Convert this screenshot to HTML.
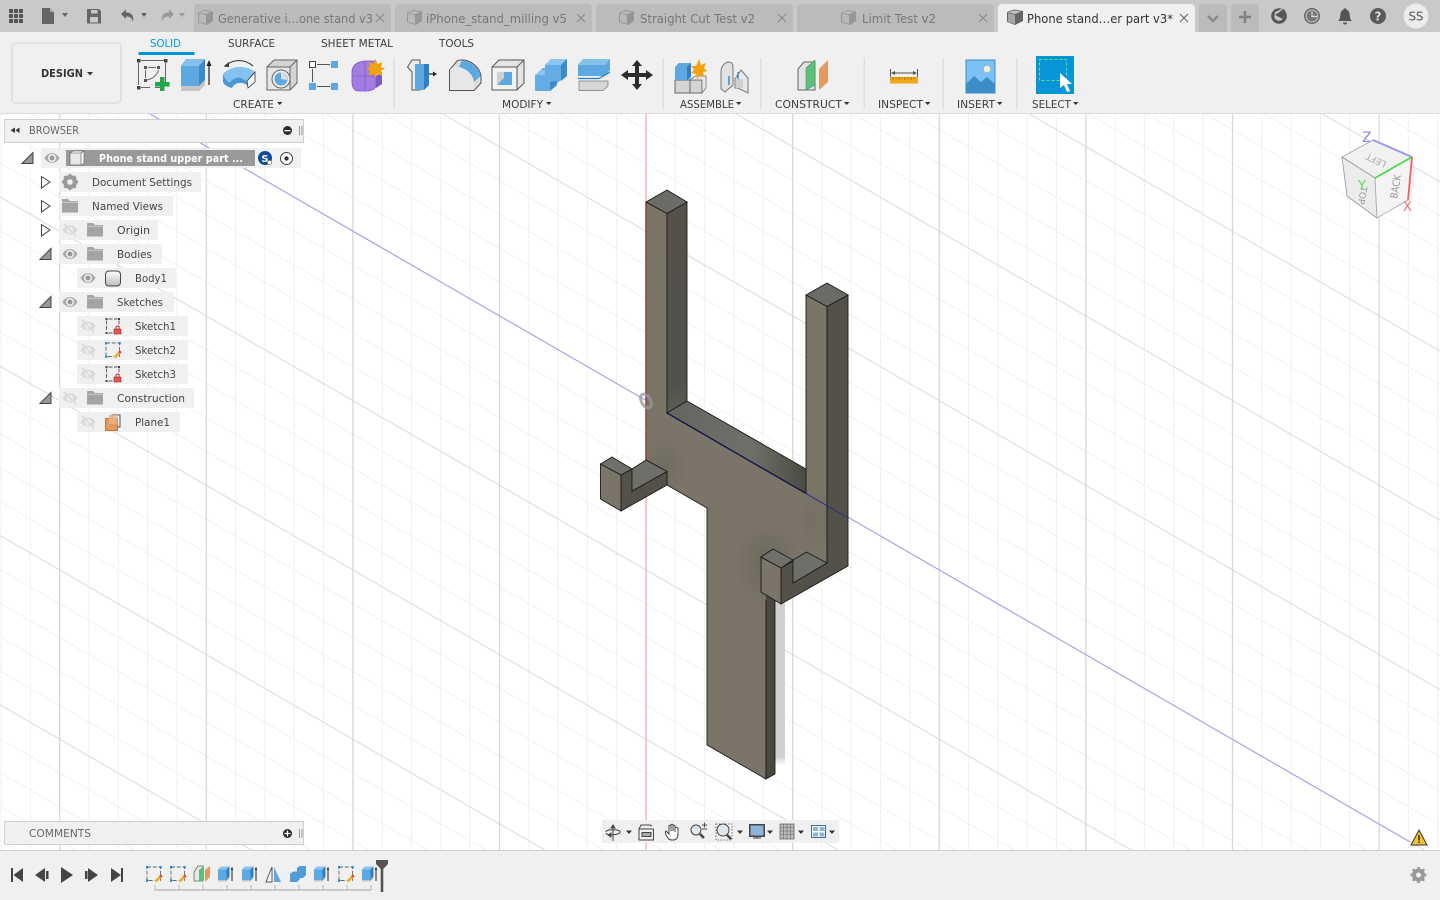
<!DOCTYPE html>
<html><head><meta charset="utf-8"><title>Phone stand</title>
<style>
html,body{margin:0;padding:0;background:#fff;width:1440px;height:900px;overflow:hidden}
svg{display:block;position:absolute;left:0;top:0}
text{font-family:"DejaVu Sans","Liberation Sans",sans-serif;font-size:11px;fill:#444}
.tab{font-size:12px;fill:#777}
.hd{font-size:11px;fill:#3c3c3c}
.tr{font-size:11px;fill:#444}
</style></head><body>
<svg width="1440" height="900" viewBox="0 0 1440 900" xmlns="http://www.w3.org/2000/svg">
<defs>
<pattern id="gv" width="29.32" height="10" patternUnits="userSpaceOnUse" patternTransform="translate(645.5,0)"><rect width="1" height="10" fill="#f0f0f0"/></pattern>
<pattern id="gV" width="146.6" height="10" patternUnits="userSpaceOnUse" patternTransform="translate(645.5,0)"><rect width="1.2" height="10" fill="#d6d6d6"/></pattern>
<pattern id="gd" width="100" height="33.86" patternUnits="userSpaceOnUse" patternTransform="translate(646,400) skewY(30)"><rect width="100" height="1" fill="#efefef"/></pattern>
<pattern id="gD" width="100" height="169.3" patternUnits="userSpaceOnUse" patternTransform="translate(646,400) skewY(30)"><rect width="100" height="1.1" fill="#dadada"/></pattern>
<linearGradient id="slab" x1="0" x2="1" y1="0" y2="0"><stop offset="0" stop-color="#64655e"/><stop offset=".6" stop-color="#6f706a"/><stop offset="1" stop-color="#4b4a42"/></linearGradient>
<linearGradient id="sidepost" x1="0" x2="0" y1="0" y2="1"><stop offset="0" stop-color="#53514a"/><stop offset=".85" stop-color="#52504a"/><stop offset="1" stop-color="#5c5d56"/></linearGradient>
<linearGradient id="cyl" x1="0" x2="0" y1="0" y2="1"><stop offset="0" stop-color="#fff"/><stop offset="1" stop-color="#bbb"/></linearGradient>
<linearGradient id="shad" x1="0" x2="0" y1="0" y2="1"><stop offset="0" stop-color="#d0d0d0"/><stop offset=".95" stop-color="#d0d0d0"/><stop offset="1" stop-color="#d0d0d0" stop-opacity="0"/></linearGradient>
<radialGradient id="ao"><stop offset="0" stop-color="#4c4a42" stop-opacity=".3"/><stop offset="1" stop-color="#4c4a42" stop-opacity="0"/></radialGradient>
<clipPath id="frontClip"><path d="M646 202L667 213.500V413L806 493.500V295L827 306.500V563L781 590V603L766 595V779L707 745V508L667 485V471.500L646 460Z"/></clipPath>
<g id="eye"><path d="M-7.500 0C-4-6.500 4-6.500 7.500 0C4 6.500-4 6.500-7.500 0Z" fill="#aaa"/><circle r="4" fill="#f0f0f0"/><circle r="2.500" fill="#999"/></g>
<g id="eyeoff" opacity=".6"><path d="M-7.500 0C-4-6 4-6 7.500 0C4 6-4 6-7.500 0Z" fill="#ccc"/><circle r="3" fill="#f0f0f0"/><path d="M-6-6L6 6" stroke="#d0d0d0" stroke-width="2"/></g>
<g id="folder"><path d="M-8-6.500L-7-7H-2L0-5H8V6.500H-8Z" fill="#a4a4a4"/><path d="M-8-3.800H8" stroke="#e0e0e0" stroke-width=".7"/></g>
<g id="skBase" fill="none"><path d="M-4.500-7H4.500M6-5.500V2M-6.500-5.500V5.500M-4.500 7H0" stroke="#555" stroke-width=".9" stroke-dasharray="4 1.500"/><g fill="#444" stroke="none"><rect x="-7.500" y="-8" width="2" height="2"/><rect x="5" y="-8" width="2" height="2"/><rect x="-7.500" y="6" width="2" height="2"/></g></g>
<g id="lock"><rect x="-1" y="3" width="7" height="5" fill="#e05858" stroke="#b02020" stroke-width=".6"/><path d="M1 3V1.500a1.500 1.500 0 013 0V3" fill="none" stroke="#c03030"/></g>
<g id="ext"><path d="M0 4.500L3 1.500H11.500V11.500L8.500 15H0Z" fill="#5da8e0"/><path d="M0 4.500L3 1.500H11.500L8.500 4.500Z" fill="#8cc4ee"/><path d="M8.500 4.500L11.500 1.500V11.500L8.500 15Z" fill="#2f7fbe"/><path d="M0 15H8.500L11.500 12V13.500L8.500 16.500H0Z" fill="#c4c4c4"/><path d="M14 3V16" stroke="#333" stroke-width="1.100"/><path d="M12.700 5L14 1.500L15.300 5Z" fill="#333"/></g>
<g id="sk2"><rect x="1" y="1" width="13.500" height="13.500" fill="none" stroke="#666" stroke-dasharray="4 1.800" stroke-width=".9"/><rect x="0" y="0" width="2.300" height="2.300" fill="#1e90e0"/><rect x="13.500" y="0" width="2.300" height="2.300" fill="#1e90e0"/><rect x="0" y="13.500" width="2.300" height="2.300" fill="#1e90e0"/><path d="M9.500 15.500L14.500 10.500" stroke="#e9b33a" stroke-width="2.800"/><path d="M14 11L15.800 9.200" stroke="#e05050" stroke-width="2.800"/></g>
</defs>

<!-- canvas -->
<rect x="0" y="114" width="1440" height="736" fill="#fff"/>
<rect x="0" y="114" width="1440" height="736" fill="url(#gd)"/>
<rect x="0" y="114" width="1440" height="736" fill="url(#gv)"/>
<rect x="0" y="114" width="1440" height="736" fill="url(#gD)"/>
<rect x="0" y="114" width="1440" height="736" fill="url(#gV)"/>
<rect x="645.300" y="114" width="1.600" height="736" fill="#f6bcbc"/>
<path d="M150 113.800L1410 842" stroke="#9c9cf2" stroke-width="1"/>

<!-- shadow -->
<rect x="775" y="600" width="10" height="165" fill="url(#shad)"/>
<!-- thin side -->
<path d="M765.500 542L775 548V774L766 779Z" fill="#4a4840" stroke="#111" stroke-width=".8"/>
<path d="M775 547L793 557.500L792 561L775 551Z" fill="#fff"/>
<!-- main front -->
<path d="M646 202L667 213.500V413L806 493.500V295L827 306.500V563L781 590V603L766 595V779L707 745V508L667 485V471.500L646 460Z" fill="#7a7568"/>
<g clip-path="url(#frontClip)">
<ellipse cx="768" cy="565" rx="34" ry="48" fill="url(#ao)"/>
<ellipse cx="664" cy="465" rx="24" ry="34" fill="url(#ao)" opacity=".7"/>
<ellipse cx="815" cy="520" rx="20" ry="40" fill="url(#ao)" opacity=".4"/>
</g>
<path d="M646 202V460" stroke="#8e3a3a" stroke-width="1.400"/>
<path d="M646 202L667 213.500V413L806 493.500V295L827 306.500M646 460L667 471.500V485L707 508V745L766 779V600" fill="none" stroke="#1a1a1a" stroke-width=".9"/>
<!-- left post side & top -->
<path d="M667 213.500L687 202V401L667 413Z" fill="url(#sidepost)" stroke="#1a1a1a" stroke-width=".9"/>
<path d="M646 202L667 190L687 202L667 213.500Z" fill="#6b6c65" stroke="#1a1a1a" stroke-width=".9"/>
<!-- slab -->
<path d="M667 413L687 401L806 469V493.500Z" fill="url(#slab)" stroke="#1a1a1a" stroke-width=".9"/>
<path d="M667 413L806 493.500" stroke="#10104a" stroke-width="1.300"/>
<!-- right post -->
<path d="M827 306.500L848 295V566L781 604V568L793 561V583L827 563Z" fill="#53514a" stroke="#1a1a1a" stroke-width=".9"/>
<path d="M806 295L827 283L848 295L827 306.500Z" fill="#6b6c65" stroke="#1a1a1a" stroke-width=".9"/>
<path d="M827 306.500V563" stroke="#1a1a1a" stroke-width=".9"/>
<path d="M793 560L806.500 552L827 563L793 583Z" fill="#6e6f69" stroke="#1a1a1a" stroke-width=".9"/>
<!-- right block -->
<path d="M761 557L781 568V604L761 592Z" fill="#7a7568" stroke="#1a1a1a" stroke-width=".9"/>
<path d="M761 557L773 549L793 560L781 568Z" fill="#6f706a" stroke="#1a1a1a" stroke-width=".9"/>
<!-- left hook -->
<path d="M621 475L632 469V491L667 471.500V485L621 511Z" fill="#53514a" stroke="#1a1a1a" stroke-width=".9"/>
<path d="M632 469L646 460L667 471.500L632 491Z" fill="#6e6f69" stroke="#1a1a1a" stroke-width=".9"/>
<path d="M600.500 464L621 475V511L600.500 499Z" fill="#7a7568" stroke="#1a1a1a" stroke-width=".9"/>
<path d="M600.500 464L612 457L632 469L621 475Z" fill="#6f706a" stroke="#1a1a1a" stroke-width=".9"/>
<!-- blue over model -->
<path d="M806 493.500L848 518" stroke="#2a2a90" stroke-width="1"/>
<!-- origin marker -->
<ellipse cx="646" cy="401" rx="4.500" ry="7.500" transform="rotate(-30 646 401)" fill="none" stroke="#999" stroke-width="3" opacity=".8"/>

<!-- view cube -->
<path d="M1412 157L1416 170L1411 200L1380 216L1395 180Z" fill="#ddd" opacity=".5"/>
<path d="M1342 157L1373 140L1412 157L1375 178Z" fill="#f1f1f1" stroke="#aaa" stroke-width=".8"/>
<path d="M1342 157L1375 178L1377 218L1347 196Z" fill="#ececec" stroke="#999" stroke-width=".8"/>
<path d="M1375 178L1412 157L1408 200L1377 218Z" fill="#f4f4f4" stroke="#aaa" stroke-width=".8"/>
<text transform="translate(1387,162) rotate(205)" style="font-size:9px;fill:#aaa">LEFT</text>
<text transform="translate(1361,186) rotate(100)" style="font-size:9px;fill:#999">TOP</text>
<text transform="translate(1397,199) rotate(-80)" textLength="24" lengthAdjust="spacingAndGlyphs" style="font-size:10px;fill:#999">BACK</text>
<path d="M1373 140L1412 157" stroke="#9a9aee" stroke-width="2"/>
<path d="M1412 157L1375 178" stroke="#4fd84f" stroke-width="1.800"/>
<path d="M1412 157L1408 200" stroke="#ee6464" stroke-width="1.800"/>
<text x="1362" y="142" style="font-size:14px;fill:#8a8af0">Z</text>
<text x="1358" y="190" style="font-size:13px;fill:#55dd55">Y</text>
<text x="1403" y="211" style="font-size:13px;fill:#ee7070">X</text>

<!-- warning -->
<path d="M1419 830L1427 845H1411Z" fill="#f2c230" stroke="#333" stroke-width="1"/>
<rect x="1418.300" y="835" width="1.400" height="5.500" fill="#222"/><rect x="1418.300" y="841.500" width="1.400" height="1.500" fill="#222"/>

<!-- top bar -->
<rect x="0" y="0" width="1440" height="32" fill="#c9c9c9"/>
<g fill="#bbb">
<path d="M194 32V8a4 4 0 014-4H387a4 4 0 014 4V32Z"/>
<path d="M395 32V8a4 4 0 014-4H588a4 4 0 014 4V32Z"/>
<path d="M596 32V8a4 4 0 014-4H789a4 4 0 014 4V32Z"/>
<path d="M797 32V8a4 4 0 014-4H990a4 4 0 014 4V32Z"/>
<path d="M1199 32V8a4 4 0 014-4H1223a4 4 0 014 4V32Z"/>
<path d="M1231 32V8a4 4 0 014-4H1255a4 4 0 014 4V32Z"/>
</g>
<path d="M998 32V8a4 4 0 014-4H1191a4 4 0 014 4V32Z" fill="#f0f0f0"/>
<!-- tab icons -->
<g id="tc"><path d="M198 13L204 10L213 11.500V21L207 25L198 22.500Z" fill="#969696"/><path d="M199 13.500L206 15V23.800L199 22Z" fill="#b8b8b8"/><path d="M199.500 13L204 11L211 12L206 14Z" fill="#bdbdbd"/></g>
<use href="#tc" x="209"/><use href="#tc" x="421"/><use href="#tc" x="643"/>
<path d="M1007 12L1014 9.500L1023 11V21L1015 25L1007 22Z" fill="#666"/><path d="M1008 13L1015 15V24L1008 22Z" fill="#a6a6a6"/><path d="M1008 12.500L1014 10.500L1021 11.500L1015 14Z" fill="#c4c4c4"/>
<text class="tab" x="218" y="23" textLength="155" lengthAdjust="spacingAndGlyphs">Generative i…one stand v3</text>
<text class="tab" x="426" y="23" textLength="141" lengthAdjust="spacingAndGlyphs">iPhone_stand_milling v5</text>
<text class="tab" x="640" y="23" textLength="115" lengthAdjust="spacingAndGlyphs">Straight Cut Test v2</text>
<text class="tab" x="862" y="23" textLength="74" lengthAdjust="spacingAndGlyphs">Limit Test v2</text>
<text class="tab" x="1027" y="23" textLength="146" lengthAdjust="spacingAndGlyphs" style="fill:#333">Phone stand…er part v3*</text>
<g stroke="#888" stroke-width="1.100" fill="none">
<path d="M376 14L384 22M384 14L376 22"/><path d="M577 14L585 22M585 14L577 22"/><path d="M778 14L786 22M786 14L778 22"/><path d="M979 14L987 22M987 14L979 22"/><path d="M1180 14L1188 22M1188 14L1180 22" stroke="#666"/>
</g>
<path d="M1208 16L1213 21L1218 16" fill="none" stroke="#8a8a8a" stroke-width="2.400"/>
<path d="M1245 11V23M1239 17H1251" stroke="#808080" stroke-width="2.600"/>
<!-- left top icons -->
<g fill="#555"><rect x="9" y="9" width="4" height="4"/><rect x="14" y="9" width="4" height="4"/><rect x="19" y="9" width="4" height="4"/><rect x="9" y="14" width="4" height="4"/><rect x="14" y="14" width="4" height="4"/><rect x="19" y="14" width="4" height="4"/><rect x="9" y="19" width="4" height="4"/><rect x="14" y="19" width="4" height="4"/><rect x="19" y="19" width="4" height="4"/></g>
<path d="M42 8H50L54 12V24H42Z" fill="#666"/><path d="M50 8V12H54" fill="#aaa"/>
<path d="M62 13H68L65 17Z" fill="#666"/>
<path d="M87 9H99L101 11V23.500H87Z" fill="#666"/><rect x="91" y="10" width="6.500" height="3.500" fill="#c9c9c9"/><rect x="90" y="17" width="8" height="5.500" fill="#c9c9c9"/>
<path d="M121 14L126 9.500V12.500C132 12.500 134 16 133 22C132 18 130 16.500 126 16.500V19Z" fill="#666"/>
<path d="M141 13H147L144 17Z" fill="#666"/>
<path d="M174 14L169 9.500V12.500C163 12.500 161 16 162 22C163 18 165 16.500 169 16.500V19Z" fill="#999"/>
<path d="M179 13H185L182 17Z" fill="#999"/>
<!-- right top icons -->
<circle cx="1279" cy="16" r="6.300" fill="none" stroke="#555" stroke-width="3"/><path d="M1275 15L1285 8.500L1283 19Z" fill="#555"/><path d="M1275 13L1282 9.500M1284 8L1287 12" stroke="#c9c9c9" stroke-width="1.300"/>
<circle cx="1312" cy="16" r="8" fill="#666"/><circle cx="1312" cy="16" r="6" fill="#777" stroke="#c9c9c9"/><path d="M1312 11.500V16.500H1317" stroke="#ddd" stroke-width="1.200" fill="none"/>
<path d="M1338 21C1340.500 19 1340 16 1340.500 13.500C1341 11 1342.500 10 1343.500 9.500C1343.500 8 1346.500 8 1346.500 9.500C1347.500 10 1349 11 1349.500 13.500C1350 16 1349.500 19 1352 21Z" fill="#555"/><path d="M1343 22.500H1347A2 2 0 011343 22.500Z" fill="#555"/>
<circle cx="1378" cy="16" r="8" fill="#5a5a5a"/><text x="1378" y="20.500" text-anchor="middle" style="font-size:12px;font-weight:bold;fill:#ddd">?</text>
<circle cx="1416" cy="16" r="12.500" fill="#ececec"/><text x="1416" y="20.500" text-anchor="middle" textLength="15" style="font-size:12px;fill:#555">SS</text>

<!-- toolbar -->
<rect x="0" y="32" width="1440" height="82" fill="#f0f0f0"/>
<rect x="0" y="113" width="1440" height="1" fill="#dcdcdc"/>
<rect x="12" y="43" width="109" height="60" rx="4" fill="#f0f0f0" stroke="#dcdcdc" stroke-width="1.500"/>
<text x="41" y="77" textLength="42" lengthAdjust="spacingAndGlyphs" style="font-size:11px;font-weight:bold;fill:#333">DESIGN</text>
<path d="M87 72H93L90 75.500Z" fill="#333"/>
<text class="hd" x="150" y="47" textLength="31" lengthAdjust="spacingAndGlyphs" style="fill:#0696d7">SOLID</text>
<rect x="138.500" y="52" width="56" height="3" fill="#0696d7"/>
<text class="hd" x="228" y="47" textLength="47" lengthAdjust="spacingAndGlyphs">SURFACE</text>
<text class="hd" x="321" y="47" textLength="72" lengthAdjust="spacingAndGlyphs">SHEET METAL</text>
<text class="hd" x="439" y="47" textLength="35" lengthAdjust="spacingAndGlyphs">TOOLS</text>
<g>
<text class="hd" x="233" y="108" textLength="41" lengthAdjust="spacingAndGlyphs">CREATE</text>
<text class="hd" x="502" y="108" textLength="41" lengthAdjust="spacingAndGlyphs">MODIFY</text>
<text class="hd" x="680" y="108" textLength="54" lengthAdjust="spacingAndGlyphs">ASSEMBLE</text>
<text class="hd" x="775" y="108" textLength="67" lengthAdjust="spacingAndGlyphs">CONSTRUCT</text>
<text class="hd" x="878" y="108" textLength="45" lengthAdjust="spacingAndGlyphs">INSPECT</text>
<text class="hd" x="957" y="108" textLength="38" lengthAdjust="spacingAndGlyphs">INSERT</text>
<text class="hd" x="1032" y="108" textLength="39" lengthAdjust="spacingAndGlyphs">SELECT</text>
</g>
<g fill="#333"><path d="M277 102H282.500L279.700 105Z"/><path d="M546 102H551.500L548.700 105Z"/><path d="M736 102H741.500L738.700 105Z"/><path d="M844 102H849.500L846.700 105Z"/><path d="M925 102H930.500L927.700 105Z"/><path d="M997 102H1002.500L999.700 105Z"/><path d="M1073 102H1078.500L1075.700 105Z"/></g>
<g fill="#dedede"><rect x="393.500" y="58" width="1.500" height="51"/><rect x="662.500" y="58" width="1.500" height="51"/><rect x="760" y="58" width="1.500" height="51"/><rect x="863.500" y="58" width="1.500" height="51"/><rect x="942.500" y="58" width="1.500" height="51"/><rect x="1016" y="58" width="1.500" height="51"/></g>

<!-- sketch icon -->
<path d="M141 60.500H164M165.500 63V85M163 87.500H155M141 87.500H150M138.500 63V85" fill="none" stroke="#666"/>
<g fill="#444"><rect x="137" y="59" width="3.500" height="3.500"/><rect x="164" y="59" width="3.500" height="3.500"/><rect x="137" y="86" width="3.500" height="3.500"/></g>
<g fill="#555"><rect x="144" y="66" width="3" height="3"/><rect x="157" y="66" width="3" height="3"/><rect x="144" y="79" width="3" height="3"/></g>
<path d="M145.500 70V78M148 67.500H156M147 80C153 79 157 75 158.500 70" fill="none" stroke="#666"/>
<path d="M160 77H164.500V82H169.500V86.500H164.500V91H160V86.500H155V82H160Z" fill="#20a848"/>
<!-- extrude -->
<path d="M181 66L186 59H205V80L199 86H181Z" fill="#5da8e0"/><path d="M181 66L186 59H205L199 66Z" fill="#86c1ec"/><path d="M199 66L205 59V80L199 86Z" fill="#3a8bc8"/><path d="M181 86H199L205 80V85L199 91H181Z" fill="#c6c6c6"/>
<path d="M209 63V85" stroke="#222" stroke-width="1.200"/><path d="M206.500 66L209 60L211.500 66Z" fill="#222"/>
<!-- revolve -->
<path d="M223 74V82C224 85 228 87 232 88C234 83 241 81 247 85V82L240 74L228 76Z" fill="#4a98d4"/>
<path d="M223 74C231 65 247 65 255 72L247 82C241 76 234 76 230 83C227 81 224 78 223 74Z" fill="#84c2f0"/>
<path d="M247 81L255 72V82L248 88Z" fill="#f6f6f6" stroke="#333" stroke-width=".8"/>
<path d="M226 65C234 59 245 59 253 66" fill="none" stroke="#333"/><path d="M223.500 66.500L229 62L229 67Z" fill="#333"/>
<!-- hole -->
<path d="M267 67L274 60H297V83L290 90H267Z" fill="#d4d4d4" stroke="#666"/><path d="M267 67H290V90H267Z" fill="#e6e6e6" stroke="#666"/><path d="M290 67L297 60" stroke="#666"/>
<circle cx="281" cy="79" r="9" fill="#eee" stroke="#666"/><circle cx="281" cy="79" r="6.500" fill="#5da8e0"/><path d="M281 72.500A6.500 6.500 0 01287 80L281 79Z" fill="#ddd"/>
<!-- pattern -->
<rect x="309.500" y="61.500" width="6" height="6" fill="#fff" stroke="#444"/><rect x="331" y="61" width="7" height="7" fill="#5da8e0"/><rect x="309" y="83" width="7" height="7" fill="#5da8e0"/><rect x="331" y="83" width="7" height="7" fill="#5da8e0"/>
<path d="M317 64.500H330M312.500 69V82M317 86.500H330" stroke="#555"/>
<!-- form -->
<path d="M352 72C352 65 358 61 366 61H376V84C376 89 372 91 366 91H359C354 91 352 87 352 82Z" fill="#a27ee2" stroke="#7b55c4" stroke-width=".8"/>
<path d="M353 76H376M365 62V90" stroke="#8a60d0"/><path d="M376 76L382 72V84L376 88Z" fill="#7c5ac0"/>
<path d="M375.500 59L377.500 64L382.500 62L381 67L385 68.500L381 71L382.500 76L377.500 74L375.500 77.500L373.500 74L368.500 76L370 71L366.500 68.500L370 67L368.500 62L373.500 64Z" fill="#f2a30d"/>
<!-- press pull -->
<path d="M407.500 67L412 60H420V90H412V72Z" fill="#ececec" stroke="#555"/><path d="M415 64H429V85L424 90H415Z" fill="#5da8e0"/><path d="M424 64H429V85L424 90Z" fill="#2f7fbe"/>
<path d="M429 74H435" stroke="#222" stroke-width="1.200"/><path d="M433 71.500L437 74L433 76.500Z" fill="#222"/>
<!-- fillet -->
<path d="M449.500 90.500V70L457 61C459 59.500 462 60 464 60C472 61 480 68 481 76V83L474 90.500Z" fill="#dcdcdc" stroke="#555"/>
<path d="M450 70C452 67 456 66 459 67C467 69 473 74 474 82V90H450Z" fill="#e8e8e8"/>
<path d="M462 60.500C471 61 479 68 480.500 76L474 82C473 74 467 69 459 67Z" fill="#5da8e0"/>
<!-- shell -->
<path d="M492 67L499 60H524V83L517 90H492Z" fill="#e4e4e4" stroke="#555"/><path d="M492 67H517V90H492Z" fill="#f2f2f2" stroke="#555"/><path d="M517 67L524 60" stroke="#555"/>
<path d="M497 72H512V85H497Z" fill="#d0d0d0"/><path d="M497 85L504 78V72H512V85Z" fill="#5da8e0"/>
<!-- combine -->
<path d="M535 75L543 68H545V65L551 59H567V76L557 83V85L550 91H535Z" fill="#64ade4"/>
<path d="M545 65L551 59H567L561 65ZM535 75L541 70H545V75Z" fill="#8cc6f0"/>
<path d="M561 65L567 59V76L561 81ZM550 82L557 81V85L550 91Z" fill="#3a8bc8"/>
<!-- offset -->
<path d="M578 65L583 59H610V70L605 76H578Z" fill="#5da8e0"/><path d="M578 65L583 59H610L605 65Z" fill="#86c1ec"/>
<path d="M578 78.500H599L610 72" stroke="#1e80c8" stroke-width="1.200" fill="none"/>
<path d="M579 81H608V86L603 90.500H579Z" fill="#d6d6d6" stroke="#777" stroke-width=".7"/>
<!-- move -->
<path d="M637 60L642 66H639V73H646V70L653 75L646 80V77H639V84H642L637 90L632 84H635V77H628V80L621 75L628 70V73H635V66H632Z" fill="#2c2c2c"/>
<!-- new component -->
<path d="M675 80H690V93H675Z" fill="#d4d4d4" stroke="#666"/><path d="M690 80H702V93H690Z" fill="#d4d4d4" stroke="#666"/><path d="M690 80L695 76H706V88L702 93V80Z" fill="#e8e8e8" stroke="#666" stroke-width=".7"/>
<path d="M675 67L679 63H691V76L690 80H675Z" fill="#5da8e0"/><path d="M687 67L691 63V76L687 80Z" fill="#2f7fbe"/>
<path d="M699 59L701 65L706 63L704 68L707 71L703 72L704 77L700 75L697 79L696 74L691 73L694 70L691 66L696 66Z" fill="#f2a30d"/>
<!-- joint -->
<path d="M721 89V72C721 67 724 63 728 62C732 62 733 64 733 67V85L725 92Z" fill="#e2e2e2" stroke="#777"/>
<path d="M735 79L741 70L748 78V93L738 88H735Z" fill="#e8e8e8" stroke="#777"/><path d="M736 79H743V88H736Z" fill="#cfcfcf"/>
<path d="M729 85V76M738 79V72" stroke="#1e80c8" stroke-width="1.300"/>
<!-- construct -->
<g transform="translate(0,-3)">
<path d="M798 72L804 65H815V93H798Z" fill="#e4e4e4" stroke="#666"/>
<path d="M806 71L815 63V88L806 93Z" fill="#5cbf7c" stroke="#3d9a5c" stroke-width=".6"/><path d="M819 72L828 63V85L819 93Z" fill="#e39a62"/>
</g>
<!-- inspect -->
<path d="M890.500 69V78M917.500 69V78" stroke="#555"/><path d="M892 73H916" stroke="#555"/><path d="M895 71L891 73L895 75ZM913 71L917 73L913 75Z" fill="#555"/>
<rect x="890" y="77" width="28" height="6.500" fill="#f0a818"/><path d="M893 77V80M896 77V79M899 77V80M902 77V79M905 77V80M908 77V79M911 77V80M914 77V79" stroke="#a06808" stroke-width=".8"/>
<!-- insert -->
<rect x="966" y="60" width="29" height="33" fill="#7cc0f6"/><path d="M966 93V84L974 76L981 82L987 77L995 84V93Z" fill="#3d8ec8"/><circle cx="987" cy="69" r="3.300" fill="#f8f0c0"/><rect x="966" y="60" width="29" height="33" fill="none" stroke="#3d8ec8"/>
<!-- select -->
<rect x="1036" y="56" width="38" height="38" fill="#0696d7"/><rect x="1039.500" y="59.500" width="27" height="21" fill="none" stroke="#6ee06e" stroke-dasharray="3 2"/>
<path d="M1060 73V88L1064 85L1067 92L1070 91L1067 84L1072 84Z" fill="#fff"/>

<!-- browser panel -->
<rect x="4.500" y="119.500" width="299" height="23" fill="#f0f0f0" stroke="#cfcfcf"/>
<path d="M15 127.500V133L10.500 130.300ZM19.500 127.500V133L15.500 130.300Z" fill="#333"/>
<text x="29" y="134" textLength="50" lengthAdjust="spacingAndGlyphs" style="fill:#666">BROWSER</text>
<circle cx="287.500" cy="130.500" r="4.500" fill="#2a2a2a"/><rect x="284.500" y="130" width="6" height="1.300" fill="#fff"/>
<path d="M299.500 126V135M302 126V135" stroke="#999"/>

<g fill="#f0f0f0" opacity=".95">
<rect x="41" y="148" width="260" height="20"/><rect x="59" y="172" width="142" height="20"/><rect x="59" y="196" width="114" height="20"/><rect x="59" y="220" width="99" height="20"/><rect x="59" y="244" width="103" height="20"/><rect x="77" y="268" width="99" height="20"/><rect x="59" y="292" width="115" height="20"/><rect x="77" y="316" width="111" height="20"/><rect x="77" y="340" width="111" height="20"/><rect x="77" y="364" width="111" height="20"/><rect x="59" y="388" width="135" height="20"/><rect x="77" y="412" width="103" height="20"/>
</g>
<!-- expanders -->
<g stroke="#444" stroke-width="1"><path d="M22 163.500L33 152.500V163.500Z" fill="#999"/><path d="M40 259.500L51 248.500V259.500Z" fill="#999"/><path d="M40 307.500L51 296.500V307.500Z" fill="#999"/><path d="M40 403.500L51 392.500V403.500Z" fill="#999"/>
<path d="M41.500 176.500L50 182L41.500 188Z" fill="#fff"/><path d="M41.500 200.500L50 206L41.500 212Z" fill="#fff"/><path d="M41.500 224.500L50 230L41.500 236Z" fill="#fff"/></g>

<!-- root -->
<use href="#eye" x="52" y="158"/>
<rect x="66" y="150" width="189" height="16" fill="#999"/>
<path d="M70 153L73 151H84V163L82 165H70Z" fill="#fff" stroke="#777" stroke-width=".8"/><path d="M70 153H81V165H70Z" fill="#e8e8e8" stroke="#777" stroke-width=".8"/><path d="M81 153L84 151" stroke="#777"/>
<text x="99" y="162" textLength="144" lengthAdjust="spacingAndGlyphs" style="font-weight:bold;fill:#fff">Phone stand upper part ...</text>
<circle cx="265" cy="158" r="7" fill="#0f4c9a"/><text x="265" y="162" text-anchor="middle" style="font-size:10px;font-weight:bold;fill:#fff">S</text><circle cx="269.500" cy="162.500" r="2.200" fill="#fff" stroke="#333" stroke-width=".5"/>
<circle cx="286.500" cy="158.500" r="6" fill="#fff" stroke="#444"/><circle cx="286.500" cy="158.500" r="2.200" fill="#333"/>

<!-- document settings -->
<circle cx="70" cy="182" r="5.500" fill="none" stroke="#999" stroke-width="3"/><g stroke="#999" stroke-width="2.600"><path d="M70 174V190M62 182H78M64.300 176.300L75.700 187.700M75.700 176.300L64.300 187.700"/></g><circle cx="70" cy="182" r="2.800" fill="#f0f0f0"/>
<text class="tr" x="92" y="186" textLength="100" lengthAdjust="spacingAndGlyphs">Document Settings</text>
<use href="#folder" x="70" y="206"/>
<text class="tr" x="92" y="210" textLength="71" lengthAdjust="spacingAndGlyphs">Named Views</text>
<use href="#eyeoff" x="70" y="230"/><use href="#folder" x="95" y="230"/>
<text class="tr" x="117" y="234" textLength="33" lengthAdjust="spacingAndGlyphs">Origin</text>
<use href="#eye" x="70" y="254"/><use href="#folder" x="95" y="254"/>
<text class="tr" x="117" y="258" textLength="35" lengthAdjust="spacingAndGlyphs">Bodies</text>
<use href="#eye" x="88" y="278"/>
<rect x="105.500" y="271" width="15" height="15" rx="3.500" fill="url(#cyl)" stroke="#445"/>
<text class="tr" x="135" y="282" textLength="32" lengthAdjust="spacingAndGlyphs">Body1</text>
<use href="#eye" x="70" y="302"/><use href="#folder" x="95" y="302"/>
<text class="tr" x="117" y="306" textLength="46" lengthAdjust="spacingAndGlyphs">Sketches</text>
<use href="#eyeoff" x="88" y="326"/><use href="#skBase" x="113" y="326"/><use href="#lock" x="115" y="326"/>
<text class="tr" x="135" y="330" textLength="41" lengthAdjust="spacingAndGlyphs">Sketch1</text>
<use href="#eyeoff" x="88" y="350"/><use href="#sk2" x="105" y="342"/>
<text class="tr" x="135" y="354" textLength="41" lengthAdjust="spacingAndGlyphs">Sketch2</text>
<use href="#eyeoff" x="88" y="374"/><use href="#skBase" x="113" y="374"/><use href="#lock" x="115" y="374"/>
<text class="tr" x="135" y="378" textLength="41" lengthAdjust="spacingAndGlyphs">Sketch3</text>
<use href="#eyeoff" x="70" y="398"/><use href="#folder" x="95" y="398"/>
<text class="tr" x="117" y="402" textLength="68" lengthAdjust="spacingAndGlyphs">Construction</text>
<use href="#eyeoff" x="88" y="422"/>
<path d="M112 419V415H120V427H116" fill="none" stroke="#555"/><rect x="105.500" y="418.500" width="12" height="12" fill="#e09a60" stroke="#c07838"/><rect x="109" y="415" width="8.500" height="9" fill="#e8b48a" opacity=".8"/>
<text class="tr" x="135" y="426" textLength="35" lengthAdjust="spacingAndGlyphs">Plane1</text>

<!-- comments -->
<rect x="4.500" y="821.500" width="299" height="23" fill="#f0f0f0" stroke="#cfcfcf"/>
<text x="29" y="837" textLength="62" lengthAdjust="spacingAndGlyphs" style="fill:#666">COMMENTS</text>
<circle cx="287.500" cy="833.500" r="4.500" fill="#2a2a2a"/><path d="M284.500 833.500H290.500M287.500 830.500V836.500" stroke="#fff" stroke-width="1.200"/>
<path d="M299.500 829V838M302 829V838" stroke="#999"/>

<!-- nav bar -->
<rect x="602" y="820" width="237" height="23" fill="#f0f0f0"/>
<g fill="none" stroke="#444" stroke-width="1">
<path d="M613 827V841M606 832C606 829 620 829 620 832C620 835 606 836 606 833"/><path d="M611 828L613 825L615 828Z" fill="#444"/><path d="M608 835L611 833V837Z" fill="#444"/>
<rect x="639" y="829" width="14.500" height="11"/><rect x="642" y="832.500" width="9" height="4" fill="#aaa"/><path d="M639 829L641 825H650L652 826"/>
<path d="M668 838C665 834 665 832 666 831L669 834V826C669 825 671 825 671 826V831V825C671 824 673 824 673 825V831V826C673 825 675 825 675 826V832V828C676 827 678 827 678 829V834C678 838 676 840 673 840C671 840 669 840 668 838Z" fill="#fff"/>
<circle cx="696" cy="830" r="5" fill="#dfe8ef"/><path d="M700 834L704 838" stroke-width="2.500"/><path d="M702 825H707M704.500 822.500V827.500M702 829H707" stroke-width=".9"/>
<rect x="716" y="824" width="16" height="16" stroke-dasharray="1.500 1.500" stroke="#777"/><circle cx="723" cy="830" r="6" fill="#dfe8ef"/><path d="M727 835L731 839" stroke-width="2.500"/>
<rect x="750" y="825" width="14" height="11" fill="#8fb4d8"/><path d="M753 838H761M757 836V838"/><rect x="749.500" y="824.500" width="15" height="12"/>
</g>
<rect x="780" y="824" width="14" height="15" fill="#bbb" stroke="#555" stroke-width=".7"/>
<path d="M783.500 824V839M787 824V839M790.500 824V839M780 827.500H794M780 831H794M780 834.500H794" stroke="#666" stroke-width=".6"/>
<rect x="811.500" y="825.500" width="14" height="12" fill="#fff" stroke="#446a96"/><rect x="813" y="827" width="5" height="4" fill="#8fb4d8"/><rect x="819.500" y="827" width="5" height="4" fill="#8fb4d8"/><rect x="813" y="832.500" width="5" height="4" fill="#8fb4d8"/><rect x="819.500" y="832.500" width="5" height="4" fill="#8fb4d8"/>
<g fill="#333"><path d="M626 830.500H632L629 834Z"/><path d="M737 830.500H743L740 834Z"/><path d="M767 830.500H773L770 834Z"/><path d="M798 830.500H804L801 834Z"/><path d="M829 830.500H835L832 834Z"/></g>

<!-- bottom bar -->
<rect x="0" y="850" width="1440" height="50" fill="#f0f0f0"/>
<rect x="0" y="850" width="1440" height="1" fill="#cfcfcf"/>
<g fill="#444">
<rect x="11" y="868" width="2" height="14"/><path d="M23 868V882L13.500 875Z"/>
<path d="M45 868V882L35 875Z"/><rect x="46" y="871" width="2.500" height="8"/>
<path d="M61 867V883L73 875Z"/>
<rect x="85" y="871" width="2.500" height="8"/><path d="M88 868V882L98 875Z"/>
<path d="M111 868V882L121 875Z"/><rect x="121" y="868" width="2" height="14"/>
</g>
<!-- timeline -->
<use href="#sk2" x="146" y="866"/><use href="#sk2" x="170" y="866"/>
<path d="M194 872L198 866H203V881H194Z" fill="#e6e6e6" stroke="#666" stroke-width=".8"/><path d="M199 870L204 866V880L199 882Z" fill="#5cbf7c"/><path d="M205 870L210 866V877L205 882Z" fill="#e39a62"/>
<use href="#ext" x="218" y="865"/><use href="#ext" x="242" y="865"/>
<path d="M272 867V882H266Z" fill="#fff" stroke="#555"/><path d="M274 867V882H281Z" fill="#5da8e0"/>
<path d="M290 874L293 871.500H297V868L299.500 866H306V875L303 878H300V879L297 882H290Z" fill="#4f9edb"/>
<use href="#ext" x="314" y="865"/>
<use href="#sk2" x="338" y="866"/>
<use href="#ext" x="362" y="865"/>
<path d="M155 885V890M179 885V890M203 885V890M227 885V890M251 885V890M275 885V890M299 885V890M323 885V890M347 885V890M371 885V890" stroke="#c8c8c8" stroke-width="1.500"/>
<path d="M154.500 890H371.500" stroke="#c8c8c8" stroke-width="2"/>
<path d="M376 860H388V864L383.300 869V892H380.700V869L376 864Z" fill="#555"/>
<!-- settings gear -->
<circle cx="1418.500" cy="875" r="5" fill="none" stroke="#999" stroke-width="3"/><path d="M1418.500 867V883M1410.500 875H1426.500M1412.800 869.300L1424.200 880.700M1424.200 869.300L1412.800 880.700" stroke="#999" stroke-width="2.500"/><circle cx="1418.500" cy="875" r="2.500" fill="#f0f0f0"/>
</svg>
</body></html>
